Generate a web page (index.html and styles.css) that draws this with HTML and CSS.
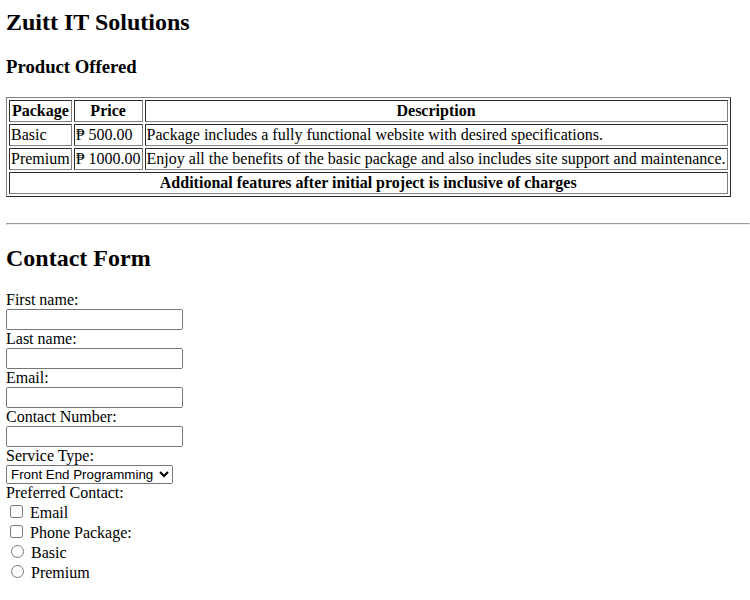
FILE: index.html
```html
<!DOCTYPE html>
<html>
<head>
<meta charset="utf-8">
<title>Zuitt IT Solutions</title>
<link rel="stylesheet" href="styles.css">
</head>
<body>
<h2 class="title">Zuitt IT Solutions</h2>
<h3>Product Offered</h3>
<table border="1" class="products">
  <tr>
    <th>Package</th>
    <th>Price</th>
    <th>Description</th>
  </tr>
  <tr>
    <td>Basic</td>
    <td>&#8369; 500.00</td>
    <td>Package includes a fully functional website with desired specifications.</td>
  </tr>
  <tr>
    <td>Premium</td>
    <td>&#8369; 1000.00</td>
    <td>Enjoy all the benefits of the basic package and also includes site support and maintenance.</td>
  </tr>
  <tr>
    <th colspan="3">Additional features after initial project is inclusive of charges</th>
  </tr>
</table>
<br>
<hr>
<h2>Contact Form</h2>
<form>
  <label for="fn">First name:</label><br>
  <input type="text" id="fn" class="field"><br>
  <label for="ln">Last name:</label><br>
  <input type="text" id="ln" class="field"><br>
  <label for="em">Email:</label><br>
  <input type="email" id="em" class="field"><br>
  <label for="cn">Contact Number:</label><br>
  <input type="tel" id="cn" class="field"><br>
  <label for="st">Service Type:</label><br>
  <select id="st" class="service">
    <option>Front End Programming</option>
    <option>Back End Programming</option>
    <option>Full Stack Programming</option>
  </select><br>
  <label>Preferred Contact:</label><br>
  <input type="checkbox" id="ce"> <label for="ce">Email</label><br>
  <input type="checkbox" id="cp"> <label for="cp">Phone</label> <label>Package:</label><br>
  <input type="radio" name="pkg" id="pb"> <label for="pb">Basic</label><br>
  <input type="radio" name="pkg" id="pp"> <label for="pp">Premium</label>
</form>
</body>
</html>
```

FILE: styles.css
```css
body {
  margin: 9px 0 8px 6px;
  font-family: "Liberation Serif", "Times New Roman", serif;
  font-size: 16px;
  color: #000;
  background: #fff;
}
h2 {
  font-size: 24px;
  margin: 19.92px 0;
}
h2.title {
  margin-top: 0;
}
h3 {
  font-size: 18.72px;
  margin: 18.72px 0;
}
.products {
  border-color: #808080;
}
.field, .service {
  font-family: "Liberation Sans", Arial, sans-serif;
  font-size: 13.33px;
  box-sizing: border-box;
}
.field {
  width: 177px;
  height: 21px;
}
.service {
  width: 167px;
}
```
